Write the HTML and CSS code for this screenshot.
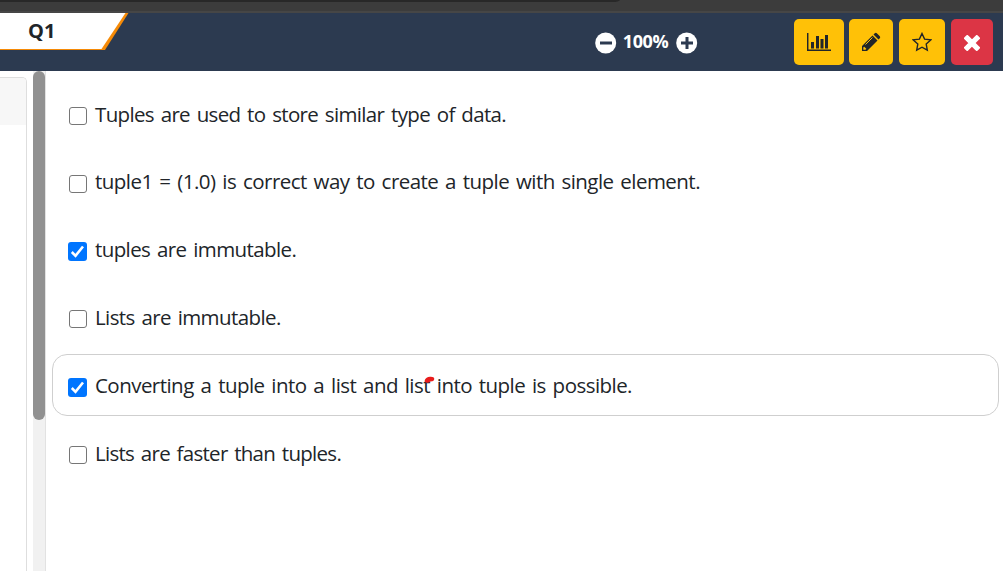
FILE: index.html
```
<!DOCTYPE html>
<html lang="en">
<head>
<meta charset="utf-8">
<title>Q1</title>
<link rel="stylesheet" href="styles.css">
</head>
<body>
<div class="chrome"><div class="chrome-tab"></div></div>
<header class="bar">
  <div class="question">
    <svg class="question-bg" width="130" height="37" viewBox="0 0 130 37"><path d="M0 0H128.500L105 37H0z" fill="#f58a07"/><path d="M0 0H125.500L101.500 36H0z" fill="#fff"/></svg>
    <span class="question-label">Q1</span>
  </div>
  <div class="zoom">
    <svg width="22" height="22" viewBox="0 0 22 22"><circle cx="10.700" cy="11" r="10.500" fill="#fff"/><path d="M5 11H17" stroke="#2c3a50" stroke-width="3"/></svg>
    <span class="zoom-value">100%</span>
    <svg width="22" height="22" viewBox="0 0 22 22"><circle cx="10.700" cy="11" r="10.500" fill="#fff"/><path d="M5 11H17M11 5V17" stroke="#2c3a50" stroke-width="3"/></svg>
  </div>
  <div class="tools">
    <button class="tool stats"><svg width="24" height="20" viewBox="0 0 24 20"><path d="M.7 1V18.300H24" fill="none" stroke="#212529" stroke-width="1.500"/><path d="M4 10H7V16.500H4zM9 4H12V16.500H9zM13.500 7H16.500V16.500H13.500zM18 3H21V16.500H18z" fill="#212529"/></svg></button>
    <button class="tool edit"><svg width="20" height="20" viewBox="0 0 20 20"><path d="M1 14L11.500 3.500L16.500 8.500L6 19H1zM12.500 2.500L13.800 1.200Q14.800.3 15.800 1.200L18.800 4.200Q19.700 5.200 18.800 6.200L17.500 7.500z" fill="#212529"/><path d="M4.500 12.500L11.500 5.500" stroke="#ffc107" stroke-width="1"/><path d="M2.300 15.500V17.700H4.500L5.300 16.800L3.200 14.700z" fill="#ffc107"/></svg></button>
    <button class="tool star"><svg width="20" height="20" viewBox="0 0 20 20"><path d="M10 1.500L12.600 7.100L18.700 7.900L14.200 12.100L15.300 18.200L10 15.200L4.700 18.200L5.800 12.100L1.300 7.900L7.400 7.100z" fill="none" stroke="#212529" stroke-width="1.400"/></svg></button>
    <button class="tool close"><svg width="16" height="16" viewBox="0 0 16 16"><path d="M3.200 3.200L12.800 12.800M12.800 3.200L3.200 12.800" stroke="#fff" stroke-width="5.200" stroke-linecap="square" stroke-linejoin="round"/></svg></button>
  </div>
</header>
<main class="content">
  <aside class="side"><div class="side-card"><div class="side-head"></div></div></aside>
  <div class="track"><div class="thumb"></div></div>
  <section class="options">
    <label class="option"><span class="box"></span><span class="text t1">Tuples are used to store similar type of data.</span></label>
    <label class="option"><span class="box"></span><span class="text t2">tuple1 = (1.0) is correct way to create a tuple with single element.</span></label>
    <label class="option"><span class="box on"><svg width="19" height="19" viewBox="0 0 19 19"><path d="M3.800 10L7.500 13.800L15 4.500" fill="none" stroke="#fff" stroke-width="2.600"/></svg></span><span class="text t3">tuples are immutable.</span></label>
    <label class="option"><span class="box"></span><span class="text t4">Lists are immutable.</span></label>
    <label class="option active"><span class="box on"><svg width="19" height="19" viewBox="0 0 19 19"><path d="M3.800 10L7.500 13.800L15 4.500" fill="none" stroke="#fff" stroke-width="2.600"/></svg></span><span class="text t5">Converting a tuple into a list and list into tuple is possible.</span><svg class="mark" width="12" height="8" viewBox="0 0 12 8"><path d="M.8 4Q2 1 6 .8Q10.200 .5 10.300 3Q10 5.500 6.500 5.500Q4 7.500 2 6.500Q0 6 .8 4z" fill="#e81c1c"/></svg></label>
    <label class="option"><span class="box"></span><span class="text t6">Lists are faster than tuples.</span></label>
  </section>
</main>
</body>
</html>
```
FILE: styles.css
```
* { box-sizing: border-box; }
body { margin: 0; height: 571px; overflow: hidden; display: flex; flex-direction: column; background: #fff; color: #212529; font-family: "Open Sans", "Noto Sans", sans-serif; }
.chrome { height: 13px; flex: none; background: #3c3c3c; border-bottom: 2px solid #464646; }
.chrome-tab { width: 620px; height: 2px; background: #282828; border-bottom-right-radius: 8px 2px; }
.bar { height: 58px; flex: none; display: flex; background: #2c3a50; }
.question { display: grid; width: 595px; flex: none; align-items: start; }
.question-bg, .question-label { grid-area: 1 / 1; }
.question-label { padding: 4px 0 0 28px; font-size: 20px; line-height: 27px; font-weight: 700; }
.zoom { display: flex; align-items: center; height: 60px; width: 199px; flex: none; }
.zoom-value { width: 59px; text-align: center; color: #fff; font-weight: 700; font-size: 18px; line-height: 24px; padding: 0 2px 5px 0; letter-spacing: -.4px; }
.tools { display: flex; padding-top: 6px; }
.tool { height: 46px; border: 0; padding: 0; border-radius: 5px; background: #ffc107; display: flex; align-items: center; justify-content: center; }
.stats { width: 50px; margin-right: 5px; }
.edit { width: 44px; margin-right: 6px; }
.star { width: 46px; margin-right: 6px; }
.close { width: 42px; background: #dc3545; padding-top: 2px; }
.close svg { border-radius: 3px; }
.content { flex: 1; display: flex; min-height: 0; }
.side { width: 33px; flex: none; padding-top: 6px; display: flex; align-items: stretch; }
.side-card { width: 27px; border: 1px solid #dedede; border-left: 0; border-bottom: 0; border-top-right-radius: 5px; overflow: hidden; }
.side-head { height: 47px; background: #f7f7f7; }
.track { width: 13px; flex: none; background: #f1f1f1; border-right: 1px solid #e2e2e2; }
.thumb { width: 12px; height: 349px; border-radius: 6px; background: #919191; }
.options { flex: 1; display: flex; flex-direction: column; gap: 5.800px; padding: 12px 4px 0 6px; }
.option { position: relative; height: 62px; flex: none; display: flex; align-items: center; padding-left: 15px; border: 1px solid transparent; border-radius: 15px; }
.active { border-color: #cfcfcf; }
.box { width: 18px; height: 18px; margin: 4px 8.500px 0 .5px; border: 1.500px solid #767676; border-radius: 3px; flex: none; }
.on { width: 19px; height: 19px; margin: 4px 8px 0 0; border: 0; background: #0075ff; }
.on svg { display: block; }
.text { font-size: 20.500px; line-height: 30px; white-space: nowrap; word-spacing: 2px; }
.t1 { letter-spacing: -.65px; }
.t2 { letter-spacing: -.54px; padding-bottom: 2px; }
.t3 { letter-spacing: -.6px; padding-bottom: 2px; }
.t4 { letter-spacing: -.6px; }
.t5 { letter-spacing: -.54px; }
.t6 { letter-spacing: -.71px; }
.mark { position: absolute; left: 371px; top: 21px; }
```
